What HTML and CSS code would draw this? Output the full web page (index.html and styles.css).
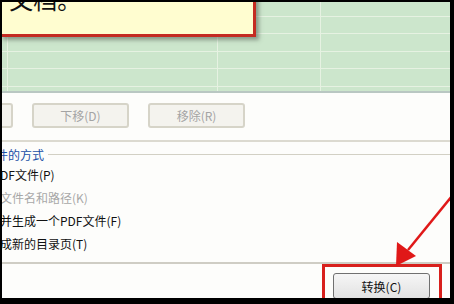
FILE: index.html
```html
<!DOCTYPE html>
<html lang="zh-CN">
<head>
    <meta charset="UTF-8">
    <title>转换为PDF</title>
    <link rel="stylesheet" href="styles.css">
</head>
<body>
    <div class="screen">
        <div class="sheet"></div>

        <div class="dialog">
            <div class="btn-row">
                <button class="btn btn-cut" disabled>上移(U)</button>
                <button class="btn" disabled>下移(D)</button>
                <button class="btn" disabled>移除(R)</button>
            </div>

            <div class="group">
                <div class="group-title"><span>件的方式</span></div>
                <div class="option">DF文件(P)</div>
                <div class="option off">文件名和路径(K)</div>
                <div class="option">并生成一个PDF文件(F)</div>
                <div class="option">成新的目录页(T)</div>
            </div>

            <div class="footer">
                <button class="btn btn-go">转换(C)</button>
            </div>
        </div>

        <!-- annotation layer -->
        <div class="callout">F文档。</div>
        <div class="mark"></div>
        <svg class="arrow" width="454" height="304" viewBox="0 0 454 304">
            <line x1="452" y1="196" x2="408" y2="250" stroke="#e01818" stroke-width="2.5"/>
            <polygon points="396,266 397,242 416,256" fill="#e01818"/>
        </svg>
    </div>
</body>
</html>
```

FILE: styles.css
```css
body {
    margin: 0;
    background: #000;
    font-family: "Noto Sans CJK SC", "DejaVu Sans", sans-serif;
    font-size: 12px;
    color: #111;
}
.screen {
    position: relative;
    width: 448px;
    height: 296px;
    margin: 2px 0 0 2px;
    overflow: hidden;
    background: #fdfdfb;
}
.sheet {
    height: 89px;
    background-color: #cce6cc;
    background-image:
        linear-gradient(90deg, transparent 5px, #e6f2e2 5px, #e6f2e2 6px, transparent 6px),
        linear-gradient(90deg, transparent 215px, #e6f2e2 215px, #e6f2e2 216px, transparent 216px),
        linear-gradient(90deg, transparent 318px, #e6f2e2 318px, #e6f2e2 319px, transparent 319px),
        repeating-linear-gradient(180deg, transparent 0, transparent 14px, #e6f2e2 14px, #e6f2e2 15px, transparent 15px, transparent 17.4px);
    border-bottom: 2px solid #b9c7c2;
}
.dialog {
    background: #fdfdfb;
}
.btn-row {
    display: flex;
    gap: 19px;
    padding: 10px 0 12px;
    margin-left: -86px;
    height: 25px;
    border-bottom: 2px solid #dcdad0;
}
.btn {
    width: 97px;
    height: 25px;
    border: 2px solid #d6d4c8;
    border-radius: 3px;
    background: #f4f3ee;
    color: #a4a4a4;
    font: inherit;
    font-size: 12px;
    padding: 0;
}
.group {
    padding-top: 4px;
}
.group-title {
    display: flex;
    align-items: center;
    gap: 4px;
    color: #1a4fa6;
    height: 16px;
    margin-left: -6px;
}
.group-title::after {
    content: "";
    flex: 1;
    border-top: 1px solid #d2d0c4;
}
.option {
    height: 23px;
    line-height: 23px;
    margin-left: -2px;
    font-size: 12px;
}
.group-title + .option {
    margin-top: 1px;
}
.option.off {
    color: #a8a8a8;
}
.footer {
    margin-top: 7px;
    border-top: 2px solid #cfcdc4;
    padding: 9px 0 0 331px;
}
.btn-go {
    width: 97px;
    height: 26px;
    border: 1px solid #707070;
    border-radius: 3px;
    background: linear-gradient(#f6f6f6, #e2e2e2);
    color: #111;
}
.callout {
    position: absolute;
    left: -2px;
    top: -15px;
    width: 253px;
    height: 47px;
    background: #fffdd0;
    border-right: 3px solid #c42a22;
    border-bottom: 3px solid #c42a22;
    box-shadow: 3px 3px 4px rgba(80, 90, 80, 0.55);
    font-size: 24px;
    line-height: 24px;
    color: #111;
    text-indent: -4px;
    overflow: hidden;
    white-space: nowrap;
}
.mark {
    position: absolute;
    left: 320px;
    top: 262px;
    width: 114px;
    height: 40px;
    border: 3px solid #d8201c;
}
.arrow {
    position: absolute;
    left: -2px;
    top: -2px;
}
```
